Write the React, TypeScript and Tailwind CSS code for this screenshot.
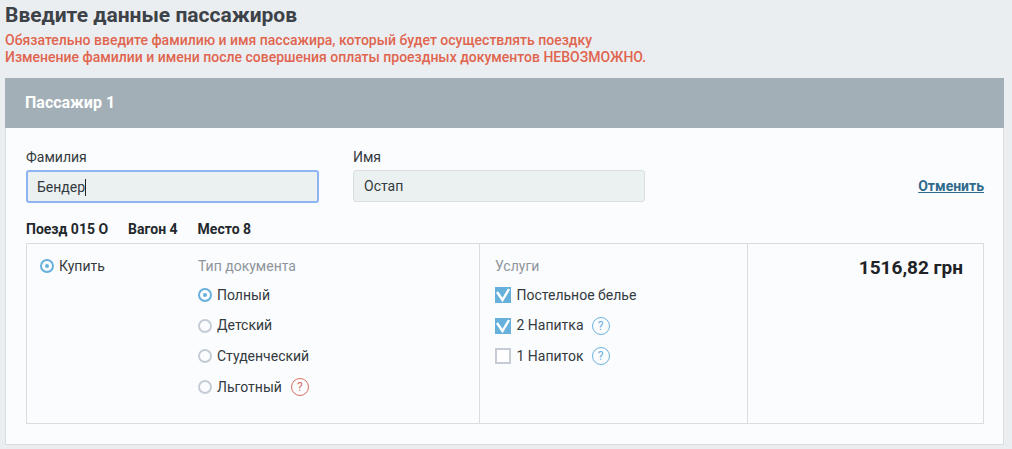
function Help({ red }: { red?: boolean }) {
  return (
    <span
      className={`flex h-[18px] w-[18px] items-center justify-center rounded-full border text-[12px] leading-none ${
        red ? "ml-[9px] border-[#d9705f] text-[#d9705f]" : "ml-[8px] border-[#6cb2de] text-[#6cb2de]"
      }`}
    >
      ?
    </span>
  );
}

function Radio({ label, on, help }: { label: string; on?: boolean; help?: boolean }) {
  return (
    <div className="flex h-[18px] items-center">
      <span
        className={`flex h-[14px] w-[14px] items-center justify-center rounded-full border-2 ${
          on ? "border-[#68b0dc]" : "border-[#c5ccd6]"
        }`}
      >
        {on && <span className="h-[4px] w-[4px] rounded-full bg-[#68b0dc]" />}
      </span>
      <span className="ml-[5px] text-[14px] text-[#333a40]">{label}</span>
      {help && <Help red />}
    </div>
  );
}

function Check({ label, on, help }: { label: string; on?: boolean; help?: boolean }) {
  return (
    <div className="flex h-[18px] items-center">
      {on ? (
        <span className="flex h-4 w-4 items-center justify-center bg-[#68b0dc]">
          <svg viewBox="0 0 16 16" className="h-4 w-4" fill="none" stroke="white" strokeWidth="2.4">
            <path d="M2 5 L7.5 13 L14 2" />
          </svg>
        </span>
      ) : (
        <span className="h-4 w-4 border-2 border-[#c5ccd6] bg-white" />
      )}
      <span className="ml-[5.5px] text-[14px] text-[#333a40]">{label}</span>
      {help && <Help />}
    </div>
  );
}

export default function App() {
  return (
    <div className="h-[449px] w-[1012px] overflow-hidden bg-[#ebeef1] px-[5px] font-['Roboto',sans-serif]">
      <h1 className="pt-[2px] text-[21px] leading-[27px] font-bold text-[#3c4247]">Введите данные пассажиров</h1>
      <div className="mt-[3px] text-[14px] leading-[17px] font-medium text-[#e0654f]">
        <p>Обязательно введите фамилию и имя пассажира, который будет осуществлять поездку</p>
        <p>Изменение фамилии и имени после совершения оплаты проездных документов НЕВОЗМОЖНО.</p>
      </div>

      <section className="mt-[12px] h-[367px] w-[999px] border border-t-0 border-[#d9dde0] bg-[#fbfcfe]">
        <div className="-mx-px flex h-[50px] items-center bg-[#a2afb7] px-[20px] text-[16px] font-bold text-white">
          Пассажир 1
        </div>

        <div className="px-[20px]">
          <div className="flex items-start pt-[20px]">
            <label className="w-[327px]">
              <div className="text-[14px] leading-[18px] text-[#333a40]">Фамилия</div>
              <div className="mt-[4px] flex h-[33px] w-[293px] items-center rounded-[3px] border-2 border-[#8fb4f2] bg-[#ebf0f1] pt-px pl-[9px] text-[14px] text-[#333a40]">
                Бендер
                <span className="h-[17px] w-px bg-[#222]" />
              </div>
            </label>
            <label>
              <div className="text-[14px] leading-[18px] text-[#333a40]">Имя</div>
              <div className="mt-[4px] flex h-[32px] w-[292px] items-center rounded-[3px] border border-[#d9dfe0] bg-[#ebf0f1] pl-[10px] text-[14px] text-[#333a40]">
                Остап
              </div>
            </label>
            <a href="#" className="mt-[29px] -mr-px ml-auto text-[14px] leading-[18px] font-bold text-[#2f6a8c] underline">
              Отменить
            </a>
          </div>

          <div className="mt-[17px] flex gap-[20px] text-[14px] leading-[18px] font-bold text-[#23282c]">
            <span>Поезд 015 О</span>
            <span>Вагон 4</span>
            <span>Место 8</span>
          </div>

          <div className="mt-[5px] flex h-[181px] w-[958px] border border-[#d9dde0]">
            <div className="flex w-[453px] border-r border-[#d9dde0] pt-[13px] pl-[13px]">
              <div className="w-[158px]">
                <Radio label="Купить" on />
              </div>
              <div>
                <div className="flex h-[18px] items-center text-[14px] text-[#8e959b]">Тип документа</div>
                <div className="mt-[11px] flex flex-col gap-[12.7px]">
                  <Radio label="Полный" on />
                  <Radio label="Детский" />
                  <Radio label="Студенческий" />
                  <Radio label="Льготный" help />
                </div>
              </div>
            </div>
            <div className="w-[268px] border-r border-[#d9dde0] pt-[13px] pl-[15px]">
              <div className="flex h-[18px] items-center text-[14px] text-[#8e959b]">Услуги</div>
              <div className="mt-[11px] flex flex-col gap-[12.7px]">
                <Check label="Постельное белье" on />
                <Check label="2 Напитка" on help />
                <Check label="1 Напиток" help />
              </div>
            </div>
            <div className="flex-1 pt-[12px] pr-[20px] text-right text-[19px] leading-[24px] font-bold text-[#1f2326]">
              1516,82 грн
            </div>
          </div>
        </div>
      </section>
    </div>
  );
}
